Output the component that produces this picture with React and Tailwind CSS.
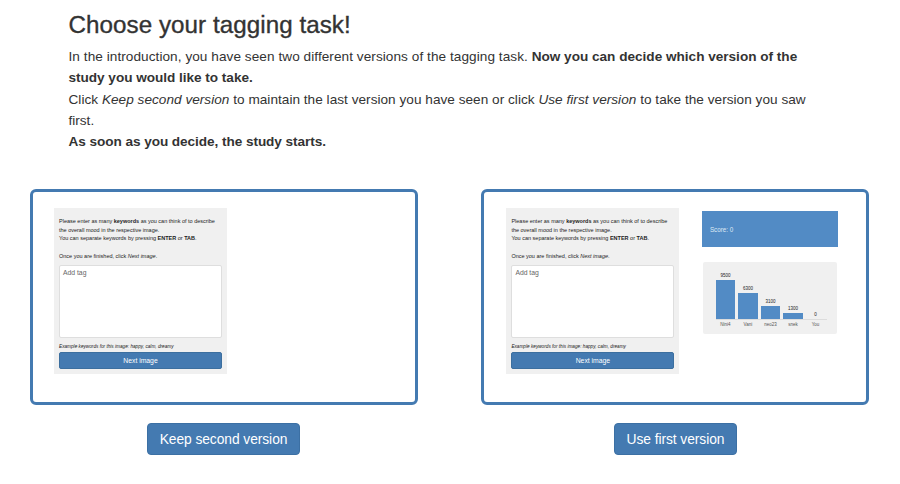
const players = [
  { name: 'Nini4', score: 9500, height: 38.5 },
  { name: 'Vani', score: 6300, height: 25.5 },
  { name: 'neo23', score: 3100, height: 12.5 },
  { name: 'snek', score: 1300, height: 5.5 },
  { name: 'You', score: 0, height: 0 },
];

function TaskForm() {
  return (
    <div className="h-[166px] w-[173px] shrink-0 bg-[#f0f0f0] px-[5px] pt-[9.2px] text-[5.5px] leading-[8.6px] text-[#222] whitespace-nowrap">
      <p>Please enter as many <b>keywords</b> as you can think of to describe</p>
      <p>the overall mood in the respective image.</p>
      <p>You can separate keywords by pressing <b>ENTER</b> or <b>TAB</b>.</p>
      <p className="mt-[8.8px]">Once you are finished, click <i>Next image</i>.</p>
      <div className="mt-[4.4px] h-[73px] w-[163px] rounded-[2px] border border-[#dedede] bg-white px-[3px] pt-[3.5px] text-[6.8px] text-[#666]">Add tag</div>
      <p className="mt-[5.5px] text-[4.7px] leading-[8.6px] italic">Example keywords for this image: happy, calm, dreamy</p>
      <div className="mt-[0.1px] flex h-[17px] w-[163px] items-center justify-center rounded-[2px] border border-[#3c6f9f] bg-[#447ab1] pt-[1.5px] text-[6.8px] text-white">Next image</div>
    </div>
  );
}

function Scoreboard() {
  return (
    <div className="flex w-[136px] flex-col pt-[2.5px]">
      <div className="flex h-[36px] items-center bg-[#528bc5] pt-[2px] pl-[8px] text-[6.3px] text-[#dfe9f4]">Score: 0</div>
      <div className="mx-[1px] mt-[15px] h-[72.5px] rounded-[2px] bg-[#f0f0f0] pt-[11.3px] pl-[12.8px]">
        <div className="flex h-[47px] w-[111px] items-end gap-[3px] border-b border-[#dcdcdc]">
          {players.map((p) => (
            <div key={p.name} className="flex w-[19.5px] flex-col items-center text-[4.5px] leading-[6px] text-[#222]">
              <span className="mb-[1px]">{p.score}</span>
              <div className="w-full bg-[#528bc5]" style={{ height: p.height }} />
            </div>
          ))}
        </div>
        <div className="mt-[2px] flex gap-[3px]">
          {players.map((p) => (
            <span key={p.name} className="w-[19.5px] text-center text-[4.5px] leading-[6px] text-[#555]">{p.name}</span>
          ))}
        </div>
      </div>
    </div>
  );
}

function Choice({ label, buttonClass, frameClass, children }) {
  return (
    <section className="flex flex-col">
      <div className={`flex h-[216px] rounded-[6px] border-[3px] border-[#447ab1] pt-[16.5px] ${frameClass}`}>{children}</div>
      <button className={`mt-[18px] flex h-[32px] items-center justify-center rounded-[4px] border border-[#3c70a4] bg-[#447ab1] pt-[3px] text-[13.8px] tracking-[-0.06px] whitespace-nowrap text-white ${buttonClass}`}>{label}</button>
    </section>
  );
}

export default function App() {
  return (
    <main className="h-[484px] w-[900px] overflow-hidden bg-white font-['Liberation_Sans',Arial,sans-serif] text-[#333]">
      <header className="h-[188.5px] pt-[12px] pl-[68.5px] whitespace-nowrap">
        <h1 className="text-[24.2px] leading-[26px] tracking-[0.05px] [-webkit-text-stroke:0.35px_#333]">Choose your tagging task!</h1>
        <div className="mt-[8.2px] text-[13.6px] leading-[21.2px]">
          <p><span className="tracking-[0.06px]">In the introduction, you have seen two different versions of the tagging task. </span><b className="tracking-[-0.01px]">Now you can decide which version of the</b></p>
          <p><b className="tracking-[-0.03px]">study you would like to take.</b></p>
          <p className="tracking-[0.028px]">Click <i>Keep second version</i> to maintain the last version you have seen or click <i>Use first version</i> to take the version you saw</p>
          <p>first.</p>
          <p><b className="tracking-[-0.06px]">As soon as you decide, the study starts.</b></p>
        </div>
      </header>
      <div className="flex gap-[63px] pl-[30px]">
        <Choice label="Keep second version" frameClass="w-[388px] pl-[21px]" buttonClass="ml-[117px] w-[153px]">
          <TaskForm />
        </Choice>
        <Choice label="Use first version" frameClass="w-[388px] gap-[22.5px] pl-[22.4px]" buttonClass="ml-[133px] w-[123px]">
          <TaskForm />
          <Scoreboard />
        </Choice>
      </div>
    </main>
  );
}
